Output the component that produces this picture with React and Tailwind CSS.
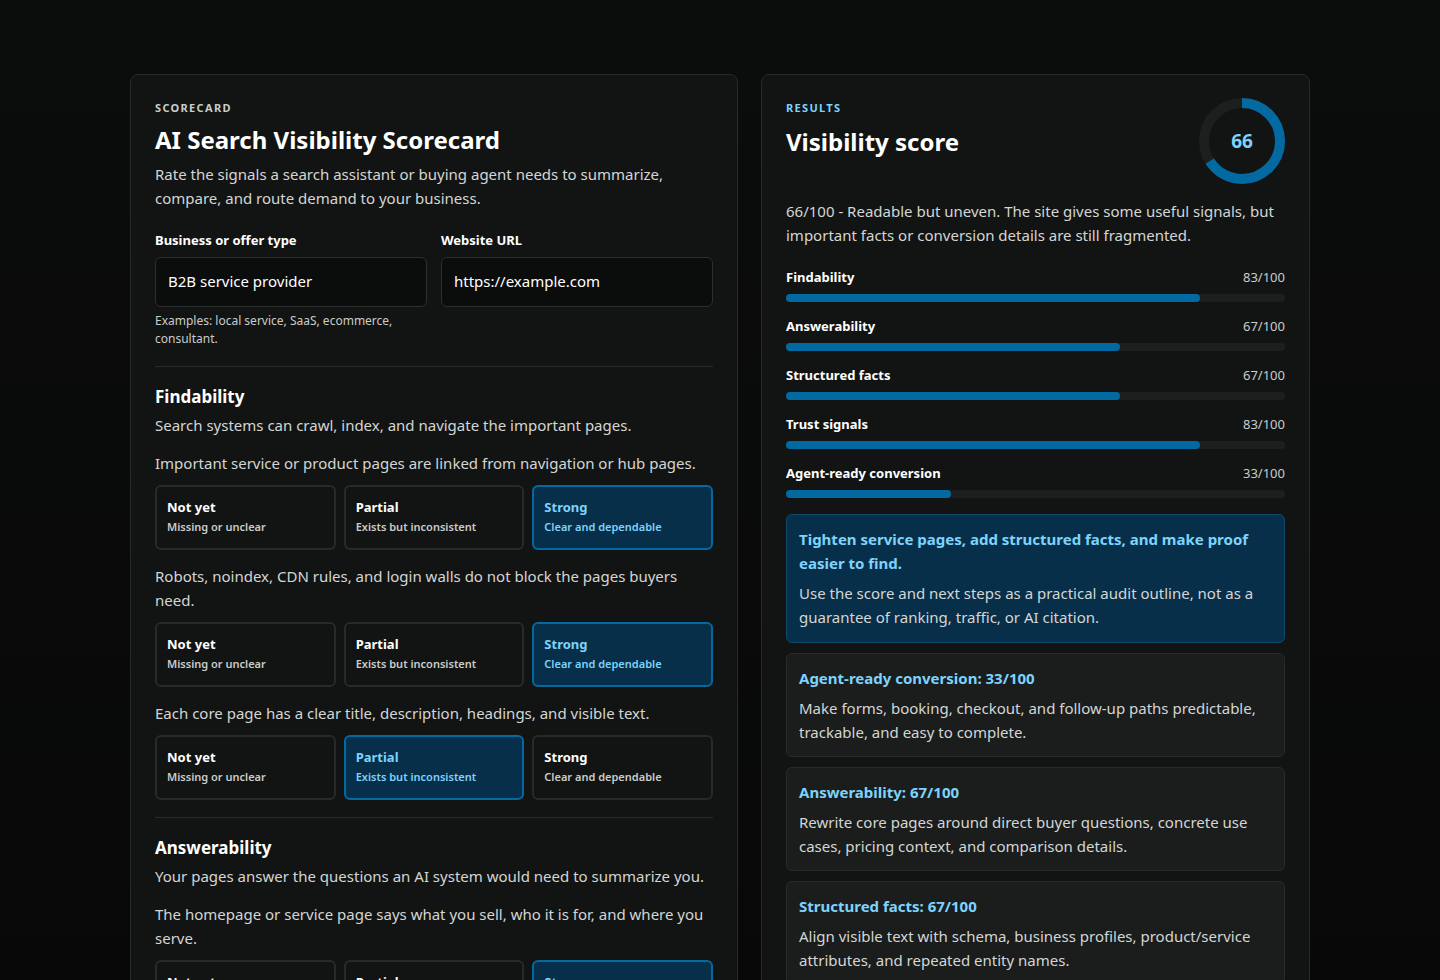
import React from 'react';

const font = { fontFamily: '"Noto Sans", "Open Sans", sans-serif' };

function Options({ selected }) {
  const opts = [
    ['Not yet', 'Missing or unclear'],
    ['Partial', 'Exists but inconsistent'],
    ['Strong', 'Clear and dependable'],
  ];
  return (
    <div className="grid grid-cols-3 gap-2">
      {opts.map(([t, s], i) => (
        <div
          key={t}
          className={
            'h-[65px] rounded-md border-2 px-[10px] flex flex-col justify-center gap-[4px] ' +
            (i === selected ? 'bg-[#082f49] border-[#0369a1] text-[#7dd3fc]' : 'bg-[#121413] border-[#262a29] text-white')
          }
        >
          <div className="text-[13px] font-bold leading-4">{t}</div>
          <div className={'text-[11px] font-semibold leading-4 ' + (i === selected ? 'text-[#7dd3fc]' : 'text-[#c9ccca]')}>{s}</div>
        </div>
      ))}
    </div>
  );
}

function Question({ text, selected }) {
  return (
    <div>
      <p className="text-[15px] leading-6 text-[#d4d6d5] mb-[10px]">{text}</p>
      <Options selected={selected} />
    </div>
  );
}

const bars = [
  ['Findability', 83],
  ['Answerability', 67],
  ['Structured facts', 67],
  ['Trust signals', 83],
  ['Agent-ready conversion', 33],
];

const recs = [
  ['Agent-ready conversion: 33/100', 'Make forms, booking, checkout, and follow-up paths predictable, trackable, and easy to complete.'],
  ['Answerability: 67/100', 'Rewrite core pages around direct buyer questions, concrete use cases, pricing context, and comparison details.'],
  ['Structured facts: 67/100', 'Align visible text with schema, business profiles, product/service attributes, and repeated entity names.'],
];

export default function App() {
  const r = 38;
  const c = 2 * Math.PI * r;
  return (
    <div style={font} className="h-[980px] overflow-hidden bg-[linear-gradient(#0b0c0c,#080808)] text-white pt-[74px]">
      <div className="flex gap-[23px] w-[1180px] mx-auto items-start">
        {/* Left: scorecard */}
        <section className="w-[608px] shrink-0 rounded-lg border border-[#262a29] bg-[#121413] px-6 pt-[25px] pb-10">
          <div className="text-[11px] font-bold tracking-[0.12em] text-[#c9ccca]">SCORECARD</div>
          <h1 className="text-[24px] font-bold mt-[7px] leading-8">AI Search Visibility Scorecard</h1>
          <p className="text-[15px] leading-6 text-[#d4d6d5] mt-[6px]">Rate the signals a search assistant or buying agent needs to summarize, compare, and route demand to your business.</p>
          <div className="grid grid-cols-2 gap-[14px] mt-[20px]">
            <div>
              <div className="text-[13px] font-bold leading-5">Business or offer type</div>
              <div className="mt-[7px] h-[50px] rounded-md border border-[#2b2f2e] bg-[#0b0c0c] px-3 flex items-center text-[15px]">B2B service provider</div>
              <p className="text-[12px] leading-[18px] text-[#c9ccca] mt-[5px] pr-6">Examples: local service, SaaS, ecommerce, consultant.</p>
            </div>
            <div>
              <div className="text-[13px] font-bold leading-5">Website URL</div>
              <div className="mt-[7px] h-[50px] rounded-md border border-[#2b2f2e] bg-[#0b0c0c] px-3 flex items-center text-[15px]">https://example.com</div>
            </div>
          </div>
          <div className="border-t border-[#262a29] mt-[18px] pt-[18px]">
            <h2 className="text-[17px] font-bold leading-6">Findability</h2>
            <p className="text-[15px] leading-6 text-[#d4d6d5] mt-[4px]">Search systems can crawl, index, and navigate the important pages.</p>
            <div className="flex flex-col gap-[14px] mt-[14px]">
              <Question text="Important service or product pages are linked from navigation or hub pages." selected={2} />
              <Question text="Robots, noindex, CDN rules, and login walls do not block the pages buyers need." selected={2} />
              <Question text="Each core page has a clear title, description, headings, and visible text." selected={1} />
            </div>
          </div>
          <div className="border-t border-[#262a29] mt-[17px] pt-[18px]">
            <h2 className="text-[17px] font-bold leading-6">Answerability</h2>
            <p className="text-[15px] leading-6 text-[#d4d6d5] mt-[4px]">Your pages answer the questions an AI system would need to summarize you.</p>
            <div className="flex flex-col gap-[14px] mt-[14px]">
              <Question text="The homepage or service page says what you sell, who it is for, and where you serve." selected={2} />
            </div>
          </div>
        </section>

        {/* Right: results */}
        <section className="flex-1 rounded-lg border border-[#262a29] bg-[#121413] px-6 pt-[25px] pb-6">
          <div className="flex justify-between">
            <div>
              <div className="text-[11px] font-bold tracking-[0.12em] text-[#7dd3fc]">RESULTS</div>
              <h2 className="text-[24px] font-bold mt-[9px] leading-8">Visibility score</h2>
            </div>
            <div className="relative w-[88px] h-[88px] -mt-[3px] -mr-[1px]">
              <svg width="88" height="88" viewBox="0 0 88 88" className="-rotate-90">
                <circle cx="44" cy="44" r={r} fill="none" stroke="#1c1f1e" strokeWidth="10" />
                <circle cx="44" cy="44" r={r} fill="none" stroke="#0369a1" strokeWidth="10" strokeDasharray={`${c * 0.66} ${c}`} />
              </svg>
              <div className="absolute inset-0 flex items-center justify-center text-[19px] font-bold text-[#7dd3fc]">66</div>
            </div>
          </div>
          <p className="text-[15px] leading-6 text-[#d4d6d5] mt-[14px]">66/100 - Readable but uneven. The site gives some useful signals, but important facts or conversion details are still fragmented.</p>
          <div className="flex flex-col gap-[14px] mt-[20px]">
            {bars.map(([n, v]) => (
              <div key={n}>
                <div className="flex justify-between text-[13px] leading-5">
                  <span className="font-bold">{n}</span>
                  <span className="text-[#c9ccca]">{v}/100</span>
                </div>
                <div className="h-2 rounded-full bg-[#1c1f1e] mt-[7px]">
                  <div className="h-2 rounded-full bg-[#0369a1]" style={{ width: `${v}%` }} />
                </div>
              </div>
            ))}
          </div>
          <div className="flex flex-col gap-[10px] mt-[16px]">
            <div className="rounded-md border border-[#0c4a6e] bg-[#082f49] px-3 pt-[12px] pb-[13px]">
              <div className="text-[15px] font-bold leading-6 text-[#7dd3fc]">Tighten service pages, add structured facts, and make proof easier to find.</div>
              <p className="text-[15px] leading-6 text-[#d4d6d5] mt-[6px]">Use the score and next steps as a practical audit outline, not as a guarantee of ranking, traffic, or AI citation.</p>
            </div>
            {recs.map(([t, d]) => (
              <div key={t} className="rounded-md border border-[#262a29] bg-[#1a1d1c] px-3 pt-[12px] pb-[12px]">
                <div className="text-[15px] font-bold leading-6 text-[#7dd3fc]">{t}</div>
                <p className="text-[15px] leading-6 text-[#d4d6d5] mt-[6px]">{d}</p>
              </div>
            ))}
          </div>
        </section>
      </div>
    </div>
  );
}
